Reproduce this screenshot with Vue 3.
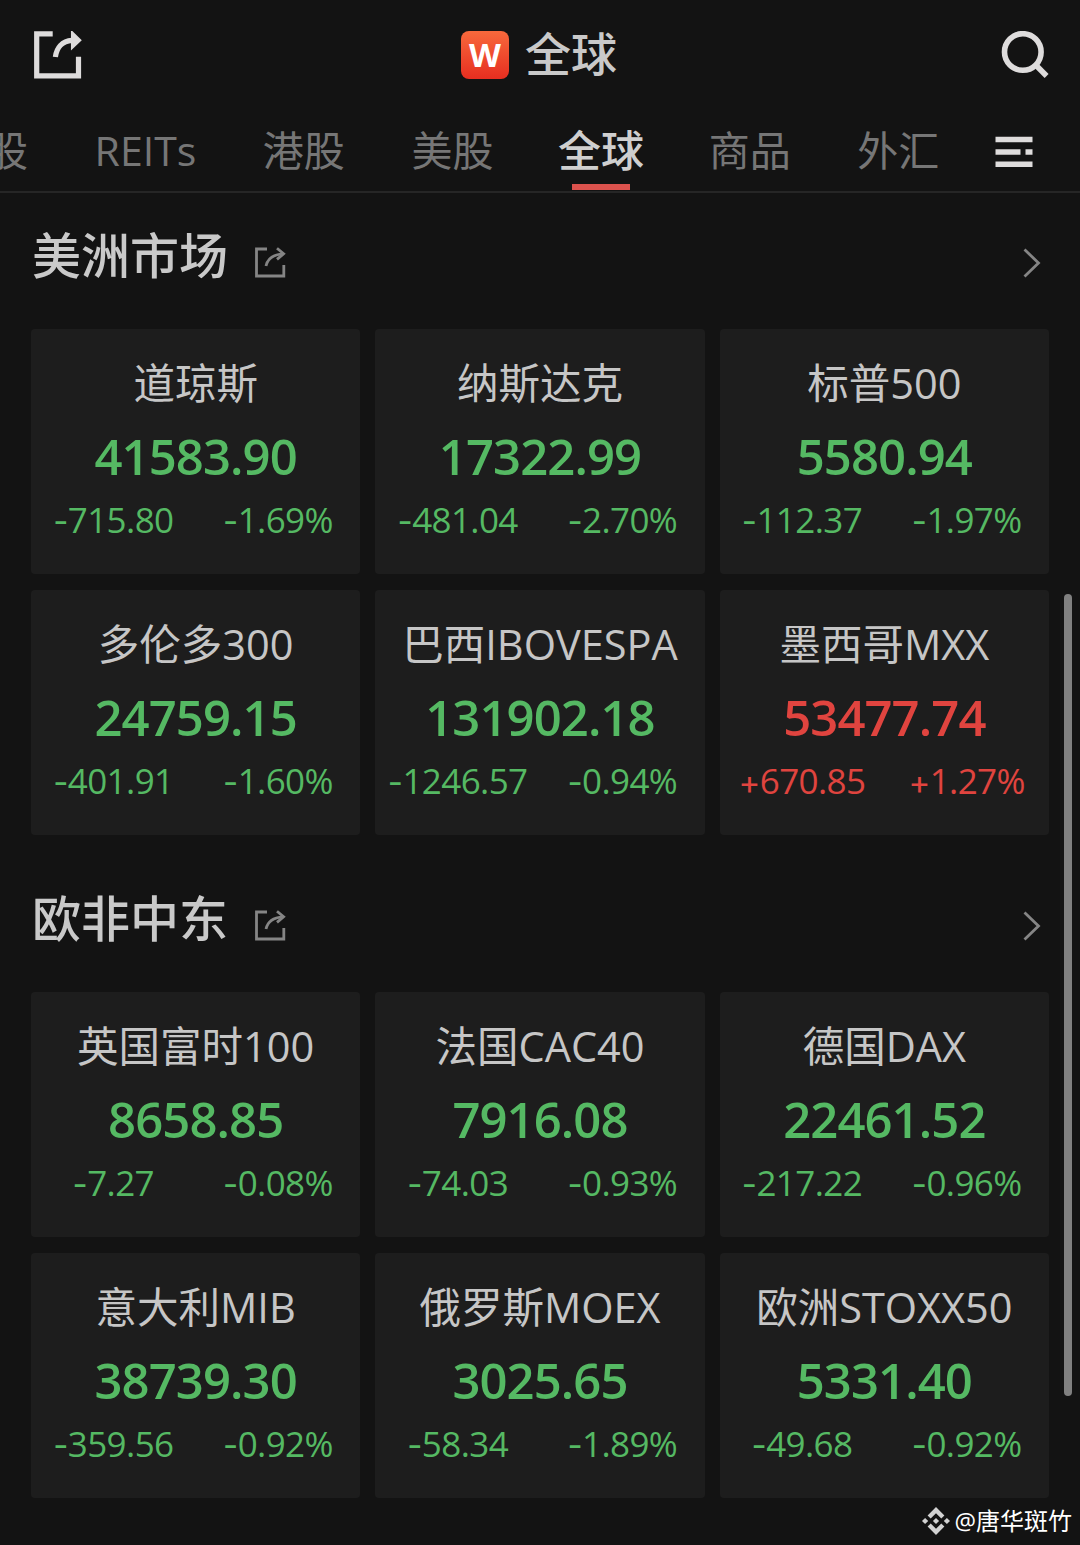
<template>
  <main>
    <header>
      <svg class="share-big" viewBox="0 0 48 48">
        <path d="M18.7 2.8H2.7V44.8H44.5V25.8" />
        <path d="M21.4 26C22.5 17 28 10 38 9.3" />
        <path class="head" d="M38.2 1.6L46 9.3L38.2 16.6Z" />
      </svg>
      <div class="title">
        <span class="logo">W</span>
        <h1>全球</h1>
      </div>
      <svg class="search" viewBox="0 0 48 48">
        <circle cx="21.8" cy="21" r="18.3" />
        <path d="M34.5 33.8L45.6 45" />
      </svg>
    </header>

    <nav>
      <a v-for="tab in tabs" :key="tab" :class="{ active: tab == currentTab }" @click="currentTab = tab">{{ tab }}</a>
      <svg class="menu" viewBox="0 0 38 32">
        <path d="M0.5 3.5H37.5M0.5 16H25.5M30.5 16H37.5M0.5 28.3H37.5" />
      </svg>
    </nav>

    <section v-for="market in markets" :key="market.name">
      <div class="market-title">
        <h2>{{ market.name }}</h2>
        <svg class="share" viewBox="0 0 31 31">
          <path d="M12 2H1.5V29H28.8V18" />
          <path d="M11 19C12.5 12 17 7.5 28 6.8" />
          <path d="M22 1.2L28.6 6.8L22 12.4" />
        </svg>
        <svg class="chevron" viewBox="0 0 18 30">
          <path d="M1.5 1.5L15.5 15L1.5 28.5" />
        </svg>
      </div>

      <div class="grid">
        <div v-for="item in market.items" :key="item.name" class="card" :class="{ up: item.change[0] == '+' }">
          <h3>{{ item.name }}</h3>
          <div class="price">{{ item.price }}</div>
          <div class="changes">
            <span><i>{{ item.change[0] }}</i>{{ item.change.slice(1) }}</span>
            <span><i>{{ item.percent[0] }}</i>{{ item.percent.slice(1) }}</span>
          </div>
        </div>
      </div>
    </section>

    <div class="scrollbar"></div>

    <div class="watermark">
      <svg viewBox="0 0 28 28">
        <path d="M14 0L22.4 8.4L19.3 11.5L14 6.2L8.7 11.5L5.6 8.4Z" />
        <path d="M14 28L22.4 19.6L19.3 16.5L14 21.8L8.7 16.5L5.6 19.6Z" />
        <path d="M14 10.9L17.1 14L14 17.1L10.9 14Z" />
        <path d="M3.1 10.9L6.2 14L3.1 17.1L0 14Z" />
        <path d="M24.9 10.9L28 14L24.9 17.1L21.8 14Z" />
      </svg>
      <span>@唐华斑竹</span>
    </div>
  </main>
</template>

<script setup>
import { ref } from 'vue';

const tabs = ['股', 'REITs', '港股', '美股', '全球', '商品', '外汇'];

const currentTab = ref('全球');

const markets = [
  {
    name: '美洲市场',
    items: [
      { name: '道琼斯', price: '41583.90', change: '-715.80', percent: '-1.69%' },
      { name: '纳斯达克', price: '17322.99', change: '-481.04', percent: '-2.70%' },
      { name: '标普500', price: '5580.94', change: '-112.37', percent: '-1.97%' },
      { name: '多伦多300', price: '24759.15', change: '-401.91', percent: '-1.60%' },
      { name: '巴西IBOVESPA', price: '131902.18', change: '-1246.57', percent: '-0.94%' },
      { name: '墨西哥MXX', price: '53477.74', change: '+670.85', percent: '+1.27%' }
    ]
  },
  {
    name: '欧非中东',
    items: [
      { name: '英国富时100', price: '8658.85', change: '-7.27', percent: '-0.08%' },
      { name: '法国CAC40', price: '7916.08', change: '-74.03', percent: '-0.93%' },
      { name: '德国DAX', price: '22461.52', change: '-217.22', percent: '-0.96%' },
      { name: '意大利MIB', price: '38739.30', change: '-359.56', percent: '-0.92%' },
      { name: '俄罗斯MOEX', price: '3025.65', change: '-58.34', percent: '-1.89%' },
      { name: '欧洲STOXX50', price: '5331.40', change: '-49.68', percent: '-0.92%' }
    ]
  }
];
</script>

<style>
body {
  background: #131313;
}
</style>

<style scoped>
* {
  box-sizing: border-box;
}

main {
  position: relative;
  width: 1080px;
  height: 1545px;
  overflow: hidden;
  background: #131313;
  color: #c9c9c9;
  font-family: "Open Sans", "Noto Sans CJK SC", sans-serif;
}

h1,
h2,
h3 {
  margin: 0;
  font-weight: 400;
}

svg {
  display: block;
  flex: none;
  fill: none;
  stroke: #dedcdc;
}

header {
  display: flex;
  align-items: center;
  justify-content: space-between;
  height: 110px;
  padding: 0 31px 0 34px;
}

.share-big {
  width: 48px;
  height: 48px;
  stroke-width: 5.2;
}

.share-big .head {
  fill: #dedcdc;
  stroke-width: 2.5;
}

.title {
  display: flex;
  align-items: center;
  gap: 16px;
  margin-right: 5px;
}

.logo {
  width: 48px;
  height: 48px;
  border-radius: 8px;
  background: linear-gradient(#f8693c, #e62e20);
  color: #fff;
  font-size: 33px;
  font-weight: 700;
  line-height: 47px;
  text-align: center;
}

h1 {
  margin-top: -4px;
  font-size: 46px;
  font-weight: 500;
  line-height: 60px;
}

.search {
  width: 48px;
  height: 48px;
  stroke-width: 5.6;
}

nav {
  display: flex;
  align-items: center;
  gap: 66.6px;
  height: 83px;
  padding-right: 46px;
  margin-left: -13px;
  border-bottom: 2px solid #262626;
}

nav a {
  flex: none;
  height: 81px;
  color: #767676;
  font-size: 41px;
  line-height: 81px;
  white-space: nowrap;
}

nav a.active {
  display: flex;
  flex-direction: column;
  align-items: center;
  margin: 0 -2px;
  color: #cfcfcf;
  font-size: 43px;
  font-weight: 500;
}

nav a.active::after {
  content: "";
  width: 58px;
  height: 6px;
  margin-top: -7px;
  background: #dc524d;
}

.menu {
  width: 38px;
  height: 32px;
  margin: 2px 0 0 -11px;
  stroke-width: 5.4;
}

.market-title {
  display: flex;
  align-items: center;
  height: 136px;
  padding: 0 39px 0 32px;
}

h2 {
  font-size: 49px;
  font-weight: 500;
  line-height: 70px;
  margin-top: -12px;
}

.share {
  width: 31px;
  height: 31px;
  margin: 2px 0 0 27px;
  stroke: #858585;
  stroke-width: 2.8;
}

.chevron {
  width: 18px;
  height: 30px;
  margin: 3px 0 0 auto;
  stroke: #858585;
  stroke-width: 2.8;
}

.grid {
  display: grid;
  grid-template-columns: repeat(3, 1fr);
  grid-auto-rows: 245px;
  gap: 16px 15px;
  padding: 0 31px;
  margin-bottom: 21px;
}

.card {
  padding-top: 26px;
  border-radius: 4px;
  background: #1d1d1d;
  color: #55b963;
  text-align: center;
  white-space: nowrap;
}

.card.up {
  color: #e0443f;
}

h3 {
  color: #c6c6c6;
  font-size: 41.5px;
  line-height: 56px;
}

.price {
  margin-top: 13px;
  font-size: 49px;
  font-weight: 550;
  line-height: 64px;
  letter-spacing: -0.9px;
}

.changes {
  display: grid;
  grid-template-columns: 1fr 1fr;
  margin-top: 8px;
  font-size: 35px;
  line-height: 48px;
  letter-spacing: -0.6px;
}

.changes i {
  font-family: Inter, sans-serif;
  font-size: 33px;
  font-style: normal;
}

.scrollbar {
  position: absolute;
  top: 594px;
  right: 8px;
  width: 8px;
  height: 802px;
  border-radius: 4px;
  background: #808080;
}

.watermark {
  position: absolute;
  right: 8px;
  bottom: 6px;
  display: flex;
  align-items: center;
  gap: 4px;
  color: #fff;
  font-size: 24px;
  line-height: 36px;
}

.watermark svg {
  width: 28px;
  height: 28px;
  fill: #d2d2d2;
  stroke: none;
}
</style>
